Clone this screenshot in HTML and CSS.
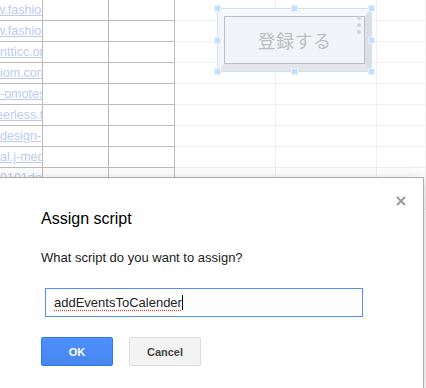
FILE: index.html
```html
<!DOCTYPE html>
<html lang="en">
<head>
    <meta charset="UTF-8">
    <meta name="viewport" content="width=device-width, initial-scale=1.0">
    <title>Assign script</title>
    <link rel="stylesheet" href="styles.css">
</head>
<body>
    <!-- Spreadsheet behind the dialog -->
    <div class="sheet">
        <div class="cell boxed link">w.fashion</div><div class="cell boxed"></div><div class="cell boxed"></div><div class="cell"></div><div class="cell"></div><div class="cell"></div>
        <div class="cell boxed link">w.fashion</div><div class="cell boxed"></div><div class="cell boxed"></div><div class="cell"></div><div class="cell"></div><div class="cell"></div>
        <div class="cell boxed link flush">ntticc.org</div><div class="cell boxed"></div><div class="cell boxed"></div><div class="cell"></div><div class="cell"></div><div class="cell"></div>
        <div class="cell boxed link flush">iom.com</div><div class="cell boxed"></div><div class="cell boxed"></div><div class="cell"></div><div class="cell"></div><div class="cell"></div>
        <div class="cell boxed link flush">-omotesando</div><div class="cell boxed"></div><div class="cell boxed"></div><div class="cell"></div><div class="cell"></div><div class="cell"></div>
        <div class="cell boxed link">eerless.tv</div><div class="cell boxed"></div><div class="cell boxed"></div><div class="cell"></div><div class="cell"></div><div class="cell"></div>
        <div class="cell boxed link flush">design-</div><div class="cell boxed"></div><div class="cell boxed"></div><div class="cell"></div><div class="cell"></div><div class="cell"></div>
        <div class="cell boxed link flush">al.j-media</div><div class="cell boxed"></div><div class="cell boxed"></div><div class="cell"></div><div class="cell"></div><div class="cell"></div>
        <div class="cell boxed link flush">9101do</div><div class="cell boxed"></div><div class="cell boxed"></div><div class="cell"></div><div class="cell"></div><div class="cell"></div>
        <div class="cell boxed"></div><div class="cell boxed"></div><div class="cell boxed"></div><div class="cell"></div><div class="cell"></div><div class="cell"></div>
    </div>

    <!-- Selected drawing (button image) -->
    <div class="drawing">
        <div class="bevel">
            <div class="face">
                <span class="face-label">登録する</span>
                <span class="dots"><i></i><i></i><i></i></span>
            </div>
        </div>
        <span class="handle h-tl"></span>
        <span class="handle h-tc"></span>
        <span class="handle h-tr"></span>
        <span class="handle h-ml"></span>
        <span class="handle h-mr"></span>
        <span class="handle h-bl"></span>
        <span class="handle h-bc"></span>
        <span class="handle h-br"></span>
    </div>

    <!-- Assign script dialog -->
    <div class="dialog">
        <button class="dialog-close" aria-label="Close">
            <svg width="10" height="10" viewBox="0 0 10 10">
                <path d="M1 1 L9 9 M9 1 L1 9" stroke="#9a9a9a" stroke-width="2" fill="none"/>
            </svg>
        </button>
        <h2 class="dialog-title">Assign script</h2>
        <p class="dialog-text">What script do you want to assign?</p>
        <div class="script-input"><span class="misspelled">addEventsToCalender</span><span class="caret"></span></div>
        <div class="dialog-buttons">
            <button class="btn btn-ok">OK</button>
            <button class="btn btn-cancel">Cancel</button>
        </div>
    </div>
</body>
</html>
```

FILE: styles.css
```css
body {
    margin: 0;
    width: 426px;
    height: 388px;
    overflow: hidden;
    position: relative;
    background: #ffffff;
    font-family: "Liberation Sans", Arial, sans-serif;
}

/* Spreadsheet */
.sheet {
    display: grid;
    grid-template-columns: 43px 66px 66px 101px 101px 1fr;
    grid-auto-rows: 21px;
}

.cell {
    box-sizing: border-box;
    border-right: 1px solid #f0f0f0;
    border-bottom: 1px solid #f0f0f0;
    overflow: hidden;
    white-space: nowrap;
}

.cell.boxed {
    border-color: #bcbcbc;
}

.link {
    font-size: 12.5px;
    line-height: 20px;
    color: #bccaf4;
    text-decoration: underline;
    text-indent: -4px;
}

.link.flush {
    text-indent: 0;
}

/* Drawing: button image with selection handles */
.drawing {
    position: absolute;
    top: 8px;
    left: 217px;
    width: 155px;
    height: 64px;
    box-sizing: border-box;
    border: 1px solid #cfe4f8;
}

.bevel {
    box-sizing: border-box;
    height: 100%;
    border-style: solid;
    border-width: 7px 6px 7px 6px;
    border-color: #f5f7f9 #dcdfe3 #e4e7ea #f3f5f8;
}

.face {
    position: relative;
    box-sizing: border-box;
    height: 100%;
    border: 1px solid #bfbfbf;
    background: #f1f5fa;
    display: flex;
    align-items: center;
    justify-content: center;
}

.face-label {
    font-family: "Noto Sans CJK JP", sans-serif;
    font-size: 18px;
    color: #bdbdbd;
    letter-spacing: 0.5px;
}

.dots {
    position: absolute;
    top: -1px;
    right: 3px;
    display: flex;
    flex-direction: column;
    gap: 3px;
}

.dots i {
    width: 4px;
    height: 4px;
    border-radius: 50%;
    background: #d2d2d2;
}

.handle {
    position: absolute;
    width: 7px;
    height: 7px;
    box-sizing: border-box;
    background: #c3dffa;
    border: 1px solid #e8f3fd;
}

.h-tl { top: -4px; left: -4px; }
.h-tc { top: -4px; left: 73px; }
.h-tr { top: -4px; right: -4px; }
.h-ml { top: 28px; left: -4px; }
.h-mr { top: 28px; right: -4px; }
.h-bl { bottom: -4px; left: -4px; }
.h-bc { bottom: -4px; left: 73px; }
.h-br { bottom: -4px; right: -4px; }

/* Dialog */
.dialog {
    position: absolute;
    top: 177px;
    left: -2px;
    width: 426px;
    height: 211px;
    box-sizing: border-box;
    padding: 32px 0 0 42px;
    background: #ffffff;
    border: 1px solid #acacac;
    border-bottom: none;
    box-shadow: 0 4px 16px rgba(0, 0, 0, 0.2);
}

.dialog-close {
    position: absolute;
    top: 18px;
    right: 17px;
    width: 10px;
    height: 10px;
    padding: 0;
    border: none;
    background: none;
    display: flex;
}

.dialog-title {
    margin: 0;
    font-size: 16px;
    line-height: 18px;
    font-weight: normal;
    color: #000000;
}

.dialog-text {
    margin: 22px 0 0;
    font-size: 13px;
    line-height: 15px;
    color: #222222;
}

.script-input {
    margin: 23px 0 0 4px;
    width: 318px;
    height: 29px;
    box-sizing: border-box;
    padding-left: 8px;
    border: 1px solid #4d90fe;
    font-size: 13px;
    line-height: 27px;
    color: #222222;
    display: flex;
    align-items: center;
}

.misspelled {
    text-decoration: underline dotted #e0443c;
    text-underline-offset: 3px;
}

.caret {
    display: inline-block;
    width: 1px;
    height: 15px;
    background: #000000;
}

.dialog-buttons {
    margin-top: 20px;
    display: flex;
    gap: 16px;
}

.btn {
    width: 72px;
    height: 29px;
    box-sizing: border-box;
    border-radius: 2px;
    font-family: "Liberation Sans", Arial, sans-serif;
    font-size: 11px;
    font-weight: bold;
    padding: 0;
}

.btn-ok {
    background: linear-gradient(#4d90fe, #4787ed);
    border: 1px solid #3079ed;
    color: #ffffff;
}

.btn-cancel {
    background: #f3f3f3;
    border: 1px solid #dcdcdc;
    color: #444444;
}
```
